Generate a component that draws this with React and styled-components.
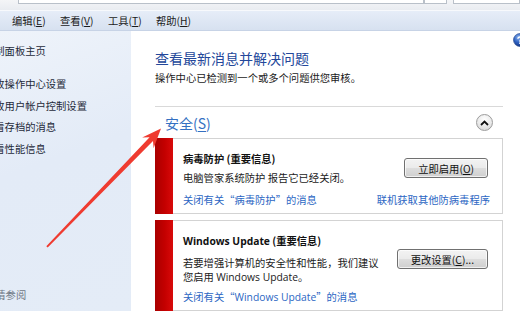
import React from 'react';
import styled, { createGlobalStyle } from 'styled-components';

const GlobalStyle = createGlobalStyle`
  html, body { margin: 0; padding: 0; background: #fff; }
  body {
    font-family: "Noto Sans CJK SC", "Noto Sans", sans-serif;
    font-size: 10.3px;
    overflow: hidden;
  }
  #root { width: 520px; height: 311px; }
`;

const Window = styled.div`
  position: relative;
  width: 520px;
  height: 311px;
  overflow: hidden;
  display: flex;
  flex-direction: column;
  background: #fff;
`;

const AddressStrip = styled.div`
  height: 10px;
  flex: none;
  display: flex;
  align-items: flex-start;
  background: linear-gradient(#f4f5f7, #e9ecf1);
`;

const AddrBox = styled.div`
  height: 3px;
  width: ${p => (p.$w ? `${p.$w}px` : 'auto')};
  flex: ${p => (p.$w ? 'none' : '1')};
  margin-left: ${p => p.$ml || 0}px;
  background: #fff;
  border: 1px solid #b9c0c9;
  border-top: none;
`;

const MenuBar = styled.div`
  flex: none;
  display: flex;
  align-items: center;
  gap: 15px;
  padding-left: 12px;
  background: linear-gradient(#e6edf8, #d7e1f0);
  border-top: 1px solid #f7f9fc;
  border-bottom: 1px solid #c7d3e6;
  box-sizing: border-box;
  height: 21px;
`;

const MenuItem = styled.span`
  color: #1b1b1b;
  font-size: 10.3px;
  line-height: 14px;
  width: 33px;
  white-space: nowrap;
  u { text-decoration: underline; text-underline-offset: 1px; }
`;

const Body = styled.div`
  flex: 1;
  display: flex;
  min-height: 0;
`;

const Nav = styled.nav`
  width: 131px;
  flex: none;
  display: flex;
  flex-direction: column;
  padding: 9px 0 8px;
  box-sizing: border-box;
  overflow: hidden;
  background: linear-gradient(160deg, #eef3fa 0%, #e3ebf7 45%, #e4ecf7 100%);
`;

const NavList = styled.div`
  display: flex;
  flex-direction: column;
  margin-left: -16px;
`;

const NavLink = styled.span`
  color: #1e2a3a;
  line-height: 21.5px;
  white-space: nowrap;
  margin-bottom: ${p => p.$mb || 0}px;
`;

const NavFooter = styled.div`
  margin-top: auto;
  margin-left: -15px;
  color: #6f7885;
  line-height: 16px;
`;

const Main = styled.main`
  position: relative;
  flex: 1;
  padding: 18px 17px 0 24px;
  display: flex;
  flex-direction: column;
`;

const HelpIcon = styled.svg`
  position: absolute;
  top: 2px;
  right: -7px;
`;

const Heading = styled.h1`
  margin: 0;
  font-size: 14px;
  font-weight: 400;
  line-height: 18px;
  color: #23479a;
`;

const Sub = styled.p`
  margin: 4px 0 0;
  line-height: 14px;
  color: #1a1a1a;
`;

const Separator = styled.hr`
  margin: 21px 0 0;
  border: none;
  border-top: 1px solid #d9d9d9;
  height: 0;
`;

const SectionHead = styled.div`
  height: 31px;
  display: flex;
  align-items: center;
  justify-content: space-between;
  padding: 0 10px;
`;

const SectionTitle = styled.span`
  font-size: 14px;
  color: #3470c2;
  u { text-decoration: underline; text-underline-offset: 2px; }
`;

const CollapseBtn = styled.span`
  width: 15px;
  height: 15px;
  border-radius: 50%;
  border: 1px solid #9c9c9c;
  background: radial-gradient(circle at 50% 30%, #ffffff 0%, #eeeeee 45%, #d2d2d2 100%);
  display: flex;
  align-items: center;
  justify-content: center;
`;

const Cards = styled.div`
  display: flex;
  flex-direction: column;
  gap: 6px;
`;

const Card = styled.div`
  display: flex;
  border: 1px solid #d3d3d3;
  border-left: none;
  background: #fff;
`;

const Flag = styled.div`
  width: 18px;
  flex: none;
  margin: -1px 0;
  background: linear-gradient(90deg, #a90000 0%, #c40000 55%, #d80a0a 100%);
`;

const CardBody = styled.div`
  flex: 1;
  padding: 12px 12px 5px 10px;
  display: flex;
  flex-direction: column;
`;

const CardMain = styled.div`
  display: flex;
  justify-content: space-between;
  align-items: flex-start;
`;

const Texts = styled.div`
  display: flex;
  flex-direction: column;
`;

const Title = styled.div`
  font-weight: 700;
  color: #111;
  line-height: 16px;
  white-space: nowrap;
`;

const Desc = styled.div`
  color: #1a1a1a;
  line-height: ${p => p.$lh}px;
  margin-top: ${p => p.$mt}px;
  white-space: nowrap;
`;

const Latin = styled.span`
  font-family: "Open Sans", "Noto Sans", sans-serif;
`;

const Button = styled.button`
  margin: ${p => p.$top}px 2px 0 0;
  height: 20px;
  padding: 0 13px;
  font-family: inherit;
  font-size: 10.3px;
  color: #111;
  border: 1px solid #707070;
  border-radius: 3px;
  background: linear-gradient(#f3f3f3 0%, #ebebeb 48%, #dddddd 52%, #cfcfcf 100%);
  box-shadow: inset 0 0 0 1px rgba(255, 255, 255, 0.7);
  white-space: nowrap;
  display: flex;
  align-items: center;
  justify-content: center;
  u { text-decoration: underline; text-underline-offset: 1px; }
`;

const LinkRow = styled.div`
  display: flex;
  justify-content: space-between;
  margin-top: ${p => p.$mt}px;
  line-height: 16px;
`;

const Link = styled.a`
  color: #2b66c3;
  text-decoration: none;
  white-space: nowrap;
`;

const Arrow = styled.svg`
  position: absolute;
  left: 0;
  top: 0;
  pointer-events: none;
`;

export default function App() {
  return (
    <>
      <GlobalStyle />
      <Window>
        <AddressStrip>
          <AddrBox $ml={18} $w={404} />
          <AddrBox $w={21} />
          <AddrBox $ml={6} />
        </AddressStrip>
        <MenuBar>
          <MenuItem>编辑(<u>E</u>)</MenuItem>
          <MenuItem>查看(<u>V</u>)</MenuItem>
          <MenuItem>工具(<u>T</u>)</MenuItem>
          <MenuItem>帮助(<u>H</u>)</MenuItem>
        </MenuBar>
        <Body>
          <Nav>
            <NavList>
              <NavLink $mb={11.5}>控制面板主页</NavLink>
              <NavLink>更改操作中心设置</NavLink>
              <NavLink>更改用户帐户控制设置</NavLink>
              <NavLink>查看存档的消息</NavLink>
              <NavLink>查看性能信息</NavLink>
            </NavList>
            <NavFooter>另请参阅</NavFooter>
          </Nav>
          <Main>
            <HelpIcon width="14" height="14" viewBox="0 0 14 14">
              <defs>
                <radialGradient id="hg" cx="40%" cy="30%" r="70%">
                  <stop offset="0%" stopColor="#8fb6ee" />
                  <stop offset="55%" stopColor="#2f62c2" />
                  <stop offset="100%" stopColor="#17398a" />
                </radialGradient>
              </defs>
              <circle cx="7" cy="7" r="6.5" fill="url(#hg)" stroke="#1a3c83" strokeWidth="0.6" />
              <path d="M5 5.2 C5 3.6 9 3.6 9 5.3 C9 6.6 7 6.6 7 8.2" stroke="#fff" strokeWidth="1.4" fill="none" strokeLinecap="round" />
              <circle cx="7" cy="10.2" r="0.9" fill="#fff" />
            </HelpIcon>
            <Heading>查看最新消息并解决问题</Heading>
            <Sub>操作中心已检测到一个或多个问题供您审核。</Sub>
            <Separator />
            <SectionHead>
              <SectionTitle>安全(<u>S</u>)</SectionTitle>
              <CollapseBtn>
                <svg width="9" height="6" viewBox="0 0 9 6">
                  <path d="M1 5 L4.5 1.6 L8 5" stroke="#111" strokeWidth="1.8" fill="none" />
                </svg>
              </CollapseBtn>
            </SectionHead>
            <Cards>
              <Card>
                <Flag />
                <CardBody>
                  <CardMain>
                    <Texts>
                      <Title>病毒防护 (重要信息)</Title>
                      <Desc $lh={16} $mt={3}>电脑管家系统防护 报告它已经关闭。</Desc>
                    </Texts>
                    <Button $top={7}>立即启用(<u>O</u>)</Button>
                  </CardMain>
                  <LinkRow $mt={6}>
                    <Link>关闭有关“病毒防护”的消息</Link>
                    <Link>联机获取其他防病毒程序</Link>
                  </LinkRow>
                </CardBody>
              </Card>
              <Card>
                <Flag />
                <CardBody>
                  <CardMain>
                    <Texts>
                      <Title><Latin>Windows Update</Latin> (重要信息)</Title>
                      <Desc $lh={14} $mt={7}>
                        若要增强计算机的安全性和性能，我们建议
                        <br />
                        您启用 <Latin>Windows Update</Latin>。
                      </Desc>
                    </Texts>
                    <Button $top={16}>更改设置(<u>C</u>)...</Button>
                  </CardMain>
                  <LinkRow $mt={5}>
                    <Link>关闭有关“<Latin>Windows Update</Latin>”的消息</Link>
                  </LinkRow>
                </CardBody>
              </Card>
            </Cards>
          </Main>
        </Body>
        <Arrow width="520" height="311" viewBox="0 0 520 311">
          <polygon
            points="46.3,246.3 47.7,247.6 153.0,141.0 153.6,148.2 161,128.5 142.2,137.6 149.6,137.3"
            fill="#ef3b30"
          />
        </Arrow>
      </Window>
    </>
  );
}
